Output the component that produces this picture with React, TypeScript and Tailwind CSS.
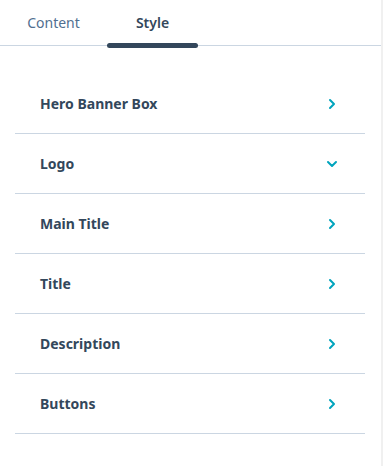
import { ChevronRight, ChevronDown } from "lucide-react";

const sections = [
    { label: "Hero Banner Box", open: false },
    { label: "Logo", open: true },
    { label: "Main Title", open: false },
    { label: "Title", open: false },
    { label: "Description", open: false },
    { label: "Buttons", open: false },
];

const App = () => {
    return (
        <div className="flex h-[466px] w-[383px] bg-white font-['Noto_Sans',sans-serif] text-[#33475b]">
            <div className="flex-1 flex flex-col">
                <div className="flex h-[46px] border-b border-[#cbd6e2]">
                    <button className="w-[107px] pt-[12px] pb-[14px] text-[14px] text-[#516f90] text-center">
                        Content
                    </button>
                    <button className="relative w-[91px] pt-[12px] pb-[14px] text-[14px] font-semibold text-center">
                        Style
                        <span className="absolute left-0 right-0 bottom-[-3px] h-[5px] rounded-full bg-[#33475b]"></span>
                    </button>
                </div>
                <div className="flex flex-col px-[15px] pt-[28px] pr-[16px]">
                    {sections.map((s) => (
                        <div
                            key={s.label}
                            className="flex items-center justify-between h-[60px] pl-[25px] pr-[25px] border-b border-[#cbd6e2]"
                        >
                            <span className="text-[14px] font-bold">{s.label}</span>
                            {s.open ? (
                                <ChevronDown className="h-[16px] w-[16px] text-[#00a4bd]" strokeWidth={3} />
                            ) : (
                                <ChevronRight className="h-[16px] w-[16px] text-[#00a4bd]" strokeWidth={3} />
                            )}
                        </div>
                    ))}
                </div>
            </div>
            <div className="w-[2px] bg-[#f0f0f0]"></div>
        </div>
    );
};

export default App;
